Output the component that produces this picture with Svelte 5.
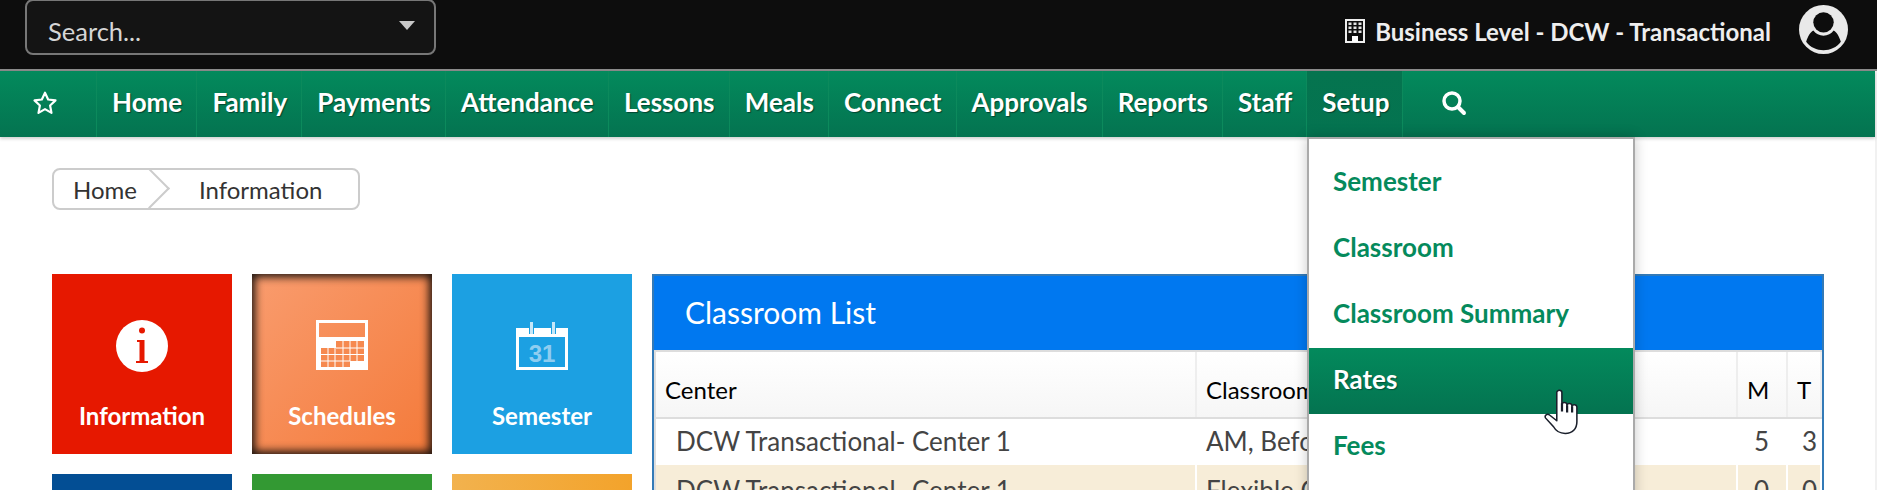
<script>
  const navItems = ['Home', 'Family', 'Payments', 'Attendance', 'Lessons', 'Meals', 'Connect', 'Approvals', 'Reports', 'Staff', 'Setup'];
  const setupItems = ['Semester', 'Classroom', 'Classroom Summary', 'Rates', 'Fees'];
  const rows = [
    { center: 'DCW Transactional- Center 1', classroom: 'AM, Before School', m: 5, t: 3 },
    { center: 'DCW Transactional- Center 1', classroom: 'Flexible Care', m: 0, t: 0 }
  ];
</script>

<div class="page">
  <header class="topbar">
    <div class="search-box">
      <span>Search...</span>
      <i class="caret"></i>
    </div>
    <div class="account">
      <svg class="building" viewBox="0 0 20 24" width="20" height="24">
        <path fill="#eee" fill-rule="evenodd" d="M0 0h20v24H0zM2 2v20h5v-5h6v5h5V2z" />
        <g fill="#e4e4e4">
          <rect x="3.500" y="3.500" width="3" height="2.500" />
          <rect x="8.500" y="3.500" width="3" height="2.500" />
          <rect x="13.500" y="3.500" width="3" height="2.500" />
          <rect x="3.500" y="7.500" width="3" height="2.500" />
          <rect x="8.500" y="7.500" width="3" height="2.500" />
          <rect x="13.500" y="7.500" width="3" height="2.500" />
          <rect x="3.500" y="11.500" width="3" height="2.500" />
          <rect x="8.500" y="11.500" width="3" height="2.500" />
          <rect x="13.500" y="11.500" width="3" height="2.500" />
        </g>
        <rect x="7" y="17" width="6" height="6" fill="#fff" />
      </svg>
      <span class="account-name">Business Level - DCW - Transactional</span>
      <svg class="avatar" viewBox="0 0 48 48" width="49" height="49">
        <circle cx="24" cy="24" r="24" fill="#e9e9e9" />
        <circle cx="24" cy="17" r="10" fill="#0d0d0d" />
        <path fill="#0d0d0d" d="M7 36C9 30 11 27 14 25a12.500 12.500 0 0 0 20 0C37 27 39 30 41 36 33 47 15 47 7 36z" />
      </svg>
    </div>
  </header>

  <div class="below">
    <div class="content">
      <nav class="nav">
        <a class="nav-star" href="#star" aria-label="Favorites">
          <svg viewBox="0 0 24 24" width="26" height="26">
            <path fill="none" stroke="#fff" stroke-width="2" stroke-linejoin="round" d="M12 2.500l2.900 6.300 6.800.8-5 4.700 1.300 6.800-6-3.400-6 3.400 1.300-6.800-5-4.700 6.800-.8z" />
          </svg>
        </a>
        {#each navItems as item}
          <a class="nav-item" class:active={item === 'Setup'} href="#nav">{item}</a>
        {/each}
        <a class="nav-search" href="#search" aria-label="Search">
          <svg viewBox="0 0 26 26" width="26" height="26">
            <circle cx="11" cy="11" r="8" fill="none" stroke="#fff" stroke-width="3.500" />
            <path stroke="#fff" stroke-width="4" stroke-linecap="round" d="M17 17l6 6" />
          </svg>
        </a>
      </nav>

      <main class="main">
        <div class="breadcrumb">
          <span class="crumb-home">Home</span>
          <span class="crumb-current">Information</span>
        </div>

        <div class="columns">
          <div class="tiles">
            <div class="tile red">
              <svg viewBox="0 0 52 52" width="52" height="52">
                <circle cx="26" cy="26" r="26" fill="#fff" />
                <circle cx="26" cy="10.500" r="3" fill="#e61800" />
                <path fill="#e61800" d="M21 20h7.500v21h3.500v2H20v-2h3.500V22H21z" />
              </svg>
              <span>Information</span>
            </div>
            <div class="tile orange">
              <svg viewBox="0 0 52 50" width="52" height="50">
                <path fill="#fff" fill-rule="evenodd" d="M0 0h52v50H0zM3 3v14h46V3z" />
                <g fill="#f6894f">
                  <rect x="20" y="21" width="28" height="20" />
                  <rect x="5" y="28" width="29" height="19" />
                </g>
                <path stroke="#fff" stroke-width="1" fill="none" d="M5 34.500h43M5 41h29M12 28v19M19 28v19M27 21v26M34 21v20M41 21v20M20 28h28" />
              </svg>
              <span>Schedules</span>
            </div>
            <div class="tile blue">
              <svg class="cal31" viewBox="0 0 52 48" width="52" height="48">
                <path fill="#fff" fill-rule="evenodd" d="M0 6h13v6h5V6h17v6h5V6h12v42H0zM3 15v30h46V15z" />
                <rect x="14" y="0" width="3" height="12" fill="#fff" opacity="0.75" />
                <rect x="36" y="0" width="3" height="12" fill="#fff" opacity="0.75" />
                <text x="26" y="40" text-anchor="middle" class="cal-num">31</text>
              </svg>
              <span>Semester</span>
            </div>
            <div class="tile navy"></div>
            <div class="tile green"></div>
            <div class="tile amber"></div>
          </div>

          <section class="panel">
            <h2 class="panel-title">Classroom List</h2>
            <div class="table-wrap">
              <table>
                <colgroup>
                  <col class="col-center" />
                  <col />
                  <col class="col-m" />
                  <col class="col-t" />
                </colgroup>
                <thead>
                  <tr>
                    <th>Center</th>
                    <th>Classroom</th>
                    <th>M</th>
                    <th>T</th>
                  </tr>
                </thead>
                <tbody>
                  {#each rows as row, i}
                    <tr class:alt={i % 2 === 1}>
                      <td class="center-cell">{row.center}</td>
                      <td>{row.classroom}</td>
                      <td class="num num-m">{row.m}</td>
                      <td class="num num-t">{row.t}</td>
                    </tr>
                  {/each}
                </tbody>
              </table>
            </div>
          </section>
        </div>
      </main>

      <ul class="dropdown">
        {#each setupItems as item}
          <li class:hover={item === 'Rates'}>{item}</li>
        {/each}
      </ul>

      <svg class="hand" viewBox="0 0 36 46" width="40" height="47" preserveAspectRatio="none">
        <path fill="#fff" stroke="#1a1f2b" stroke-width="1.400" stroke-linejoin="round" d="M11.500 3.500a2.300 2.300 0 0 1 4.600 0V15a2.300 2.300 0 0 1 4.500 0v1a2.300 2.300 0 0 1 4.500 0v1a2.300 2.300 0 0 1 4.500.5V32c0 7-4 11.500-10.500 11.500-6 0-8.500-2.500-10.500-6.500L1.500 28.500c-1.500-2.500 1.500-5 3.500-3L11.500 31z" />
        <path stroke="#1a1f2b" stroke-width="2" d="M16.200 14v8M20.800 16v7M25.300 17v6" />
      </svg>
    </div>
    <div class="scrollbar"></div>
  </div>
</div>

<style>
  :global(body) {
    margin: 0;
    overflow: hidden;
  }

  .page {
    height: 490px;
    overflow: hidden;
    font-family: Lato, "Liberation Sans", sans-serif;
    display: flex;
    flex-direction: column;
  }

  .topbar {
    height: 69px;
    flex: none;
    background: #0d0d0d;
    border-bottom: 2px solid #8a8a8a;
    display: flex;
    justify-content: space-between;
    align-items: flex-start;
    padding-left: 25px;
  }

  .search-box {
    width: 411px;
    height: 56px;
    box-sizing: border-box;
    margin-top: -1px;
    background: #141414;
    border: 2px solid #777;
    border-radius: 8px;
    padding: 15px 0 0 21px;
    position: relative;
    color: #d6d6d6;
    font-size: 25.500px;
    line-height: 30px;
  }

  .caret {
    position: absolute;
    right: 19px;
    top: 20px;
    border-left: 8px solid transparent;
    border-right: 8px solid transparent;
    border-top: 9px solid #c8c8c8;
  }

  .account {
    display: flex;
    align-items: center;
    height: 56px;
    margin-top: 3px;
    padding-right: 29px;
  }

  .building {
    margin-right: 10px;
  }

  .account-name {
    color: #eee;
    font-size: 24px;
    font-weight: 700;
    margin-right: 28px;
  }

  .avatar {
    margin-top: -3px;
  }

  .below {
    flex: 1;
    display: flex;
    min-height: 0;
  }

  .content {
    flex: 1;
    position: relative;
    min-width: 0;
  }

  .scrollbar {
    width: 2px;
    background: #f1f1f1;
  }

  .nav {
    height: 66px;
    display: flex;
    background: linear-gradient(#038a5c, #047350);
    box-shadow: 0 2px 3px rgba(0, 0, 0, 0.18);
  }

  .nav-star {
    width: 96px;
    display: flex;
    align-items: center;
    padding: 0 0 3px 32px;
    box-sizing: border-box;
  }

  .nav-item {
    display: flex;
    align-items: center;
    padding: 0 14.200px 5px 15px;
    color: #fff;
    font-size: 26px;
    font-weight: 700;
    text-decoration: none;
    text-shadow: 1px 1px 1px rgba(0, 0, 0, 0.45);
    border-left: 1px solid #0c8a5c;
  }

  .nav-item.active {
    background: linear-gradient(#05744f, #047350);
    border-right: 1px solid #0c8a5c;
    padding-right: 13px;
  }

  .nav-search {
    display: flex;
    align-items: center;
    padding: 0 0 3px 38px;
  }

  .main {
    padding: 31px 0 0 52px;
  }

  .breadcrumb {
    width: 308px;
    height: 42px;
    box-sizing: border-box;
    border: 2px solid #ccc;
    border-radius: 8px;
    display: flex;
    align-items: center;
    color: #333;
    font-size: 24px;
    position: relative;
    overflow: hidden;
  }

  .crumb-home {
    width: 121px;
    padding-left: 19px;
    box-sizing: border-box;
  }

  .crumb-home::after {
    content: '';
    position: absolute;
    left: 81px;
    top: 4px;
    width: 29px;
    height: 29px;
    box-sizing: border-box;
    border-top: 2px solid #ccc;
    border-right: 2px solid #ccc;
    transform: rotate(45deg);
  }

  .crumb-current {
    padding-left: 24px;
  }

  .columns {
    display: flex;
    gap: 20px;
    margin-top: 64px;
    margin-right: 51px;
  }

  .tiles {
    flex: none;
    display: grid;
    grid-template-columns: repeat(3, 180px);
    grid-auto-rows: 180px;
    gap: 20px;
  }

  .tile {
    color: #fff;
    font-size: 24px;
    font-weight: 700;
    display: flex;
    flex-direction: column;
    align-items: center;
    padding-top: 46px;
    box-sizing: border-box;
  }

  .tile span {
    margin-top: 29px;
  }

  .tile.orange span {
    margin-top: 31px;
  }

  .tile .cal31 {
    margin: 2px 0;
  }

  .cal-num {
    fill: #8fcdf0;
    font-family: "Liberation Sans", sans-serif;
    font-size: 24px;
  }

  .red {
    background: #e61800;
  }

  .orange {
    background: linear-gradient(135deg, #f99c6e, #f47a3a);
    box-shadow: inset 0 0 8px 3px #1c1410;
  }

  .blue {
    background: #1ca0e2;
  }

  .navy {
    background: #034e94;
  }

  .green {
    background: #339933;
  }

  .amber {
    background: linear-gradient(90deg, #f2b24e, #f3a32b);
  }

  .panel {
    flex: 1;
    min-width: 0;
    border: 2px solid #337ab7;
    border-bottom: 0;
  }

  .panel-title {
    margin: 0;
    height: 74px;
    padding-left: 31px;
    background: #0078f0;
    color: #fff;
    font-size: 30px;
    font-weight: 400;
    line-height: 72px;
  }

  .table-wrap {
    border: 2px solid #ddd;
    border-bottom: 0;
    border-right: 0;
  }

  table {
    width: 100%;
    table-layout: fixed;
    border-collapse: collapse;
    color: #444;
    font-size: 26px;
  }

  .col-center {
    width: 540px;
  }

  .col-m {
    width: 50px;
  }

  .col-t {
    width: 34px;
  }

  th {
    height: 66px;
    padding: 10px 0 0 9px;
    box-sizing: border-box;
    background: linear-gradient(#fff, #f6f6f6);
    color: #000;
    font-size: 24px;
    font-weight: 400;
    text-align: left;
    border-bottom: 2px solid #ddd;
    border-right: 2px solid #eee;
    white-space: nowrap;
    overflow: hidden;
  }

  td {
    height: 47px;
    padding: 0 0 2px 9px;
    box-sizing: border-box;
    border-right: 2px solid #fff;
    white-space: nowrap;
    overflow: hidden;
  }

  .alt td {
    padding-top: 3px;
    padding-bottom: 0;
    background: #f7edd8;
  }

  td.center-cell {
    padding-left: 20px;
  }

  td.num {
    padding-left: 0;
    text-align: right;
  }

  td.num-m {
    padding-right: 17px;
  }

  td.num-t {
    padding-right: 3px;
  }

  .dropdown {
    position: absolute;
    left: 1307px;
    top: 66px;
    width: 328px;
    box-sizing: border-box;
    margin: 0;
    padding: 11px 0 0;
    height: 400px;
    list-style: none;
    background: #fff;
    border: 2px solid #aaa;
    box-shadow: 0 0 12px rgba(0, 0, 0, 0.22);
    color: #058a5c;
    font-size: 26px;
    font-weight: 700;
  }

  .dropdown li {
    height: 66px;
    line-height: 62px;
    padding-left: 24px;
  }

  .dropdown li.hover {
    background: linear-gradient(#038a5c, #047350);
    color: #fff;
    text-shadow: 1px 1px 1px rgba(0, 0, 0, 0.35);
  }

  .hand {
    position: absolute;
    left: 1544px;
    top: 318px;
  }
</style>
